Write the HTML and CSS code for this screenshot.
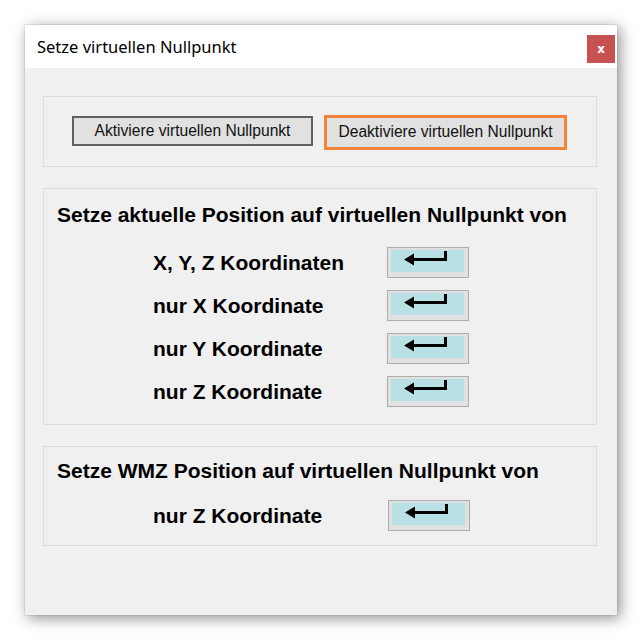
FILE: index.html
```html
<!DOCTYPE html>
<html lang="de">
<head>
    <meta charset="UTF-8">
    <meta name="viewport" content="width=device-width, initial-scale=1.0">
    <title>Setze virtuellen Nullpunkt</title>
    <link rel="stylesheet" href="styles.css">
</head>
<body>
    <div class="window">
        <div class="titlebar">
            <span class="title">Setze virtuellen Nullpunkt</span>
            <button class="close" type="button">x</button>
        </div>
        <div class="content">
            <div class="group group-toggle">
                <button class="btn" type="button">Aktiviere virtuellen Nullpunkt</button>
                <button class="btn btn-focus" type="button">Deaktiviere virtuellen Nullpunkt</button>
            </div>

            <div class="group">
                <div class="heading">Setze aktuelle Position auf virtuellen Nullpunkt von</div>
                <div class="rows">
                    <div class="row">
                        <span class="label">X, Y, Z Koordinaten</span>
                        <button class="enter" type="button"><span class="enter-face"><svg width="73" height="22" viewBox="0 0 73 22"><path d="M54.5 1V9.5H21" fill="none" stroke="#000" stroke-width="3"/><polygon points="13,9.5 23,3.5 23,15.5" fill="#000"/></svg></span></button>
                    </div>
                    <div class="row">
                        <span class="label">nur X Koordinate</span>
                        <button class="enter" type="button"><span class="enter-face"><svg width="73" height="22" viewBox="0 0 73 22"><path d="M54.5 1V9.5H21" fill="none" stroke="#000" stroke-width="3"/><polygon points="13,9.5 23,3.5 23,15.5" fill="#000"/></svg></span></button>
                    </div>
                    <div class="row">
                        <span class="label">nur Y Koordinate</span>
                        <button class="enter" type="button"><span class="enter-face"><svg width="73" height="22" viewBox="0 0 73 22"><path d="M54.5 1V9.5H21" fill="none" stroke="#000" stroke-width="3"/><polygon points="13,9.5 23,3.5 23,15.5" fill="#000"/></svg></span></button>
                    </div>
                    <div class="row">
                        <span class="label">nur Z Koordinate</span>
                        <button class="enter" type="button"><span class="enter-face"><svg width="73" height="22" viewBox="0 0 73 22"><path d="M54.5 1V9.5H21" fill="none" stroke="#000" stroke-width="3"/><polygon points="13,9.5 23,3.5 23,15.5" fill="#000"/></svg></span></button>
                    </div>
                </div>
            </div>

            <div class="group group-wmz">
                <div class="heading">Setze WMZ Position auf virtuellen Nullpunkt von</div>
                <div class="rows">
                    <div class="row">
                        <span class="label">nur Z Koordinate</span>
                        <button class="enter" type="button"><span class="enter-face"><svg width="73" height="22" viewBox="0 0 73 22"><path d="M54.5 1V9.5H21" fill="none" stroke="#000" stroke-width="3"/><polygon points="13,9.5 23,3.5 23,15.5" fill="#000"/></svg></span></button>
                    </div>
                </div>
            </div>
        </div>
    </div>
</body>
</html>
```

FILE: styles.css
```css
body { margin: 0; padding: 25px; background: #fff; font-family: "Liberation Sans", Arial, sans-serif; }
.window { width: 592px; height: 590px; background: #f0f0f0; box-shadow: 0 0 0 1px rgba(0,0,0,0.06), 3px 3px 14px rgba(0,0,0,0.45); display: flex; flex-direction: column; }
.titlebar { height: 43px; background: #fff; display: flex; justify-content: space-between; align-items: center; padding-left: 12px; }
.title { font-family: "Noto Sans", sans-serif; font-size: 16.5px; color: #000; }
.close { align-self: flex-start; margin: 10px 2px 0 0; width: 28px; height: 28px; border: 0; padding: 0; background: #c75050; color: #fff; font-family: "DejaVu Sans", sans-serif; font-weight: bold; font-size: 12px; line-height: 26px; }
.content { padding: 28px 20px 0 18px; display: flex; flex-direction: column; gap: 21px; }
.group { border: 1px solid #dcdcdc; padding: 14px 0 17px 13px; }
.group-toggle { padding: 0 0 0 28px; box-sizing: border-box; height: 71px; display: flex; align-items: center; gap: 11px; }
.btn { font-family: "Liberation Sans", Arial, sans-serif; font-size: 15.6px; color: #111; background: #e1e1e1; border: 2px solid #606060; height: 30px; width: 241px; padding: 0; margin-top: -1px; }
.btn-focus { border: 3px solid #f0843a; height: 35px; width: 243px; margin-top: 1px; }
.heading { font-weight: bold; font-size: 21px; line-height: 24px; color: #000; }
.rows { display: flex; flex-direction: column; gap: 12px; padding-left: 96px; margin-top: 20px; }
.row { display: flex; align-items: center; }
.label { width: 234px; font-weight: bold; font-size: 21px; color: #000; }
.enter { width: 82px; height: 31px; border: 1px solid #adadad; background: #e1e1e1; padding: 2px 3px 3px 3px; display: flex; }
.enter-face { display: block; width: 73px; height: 22px; background: #b8e0e5; }
.enter svg { display: block; }
.group-wmz { padding-top: 12px; padding-bottom: 14px; }
.group-wmz .rows { margin-top: 17px; }
.group-wmz .enter { margin-left: 1px; }
```
